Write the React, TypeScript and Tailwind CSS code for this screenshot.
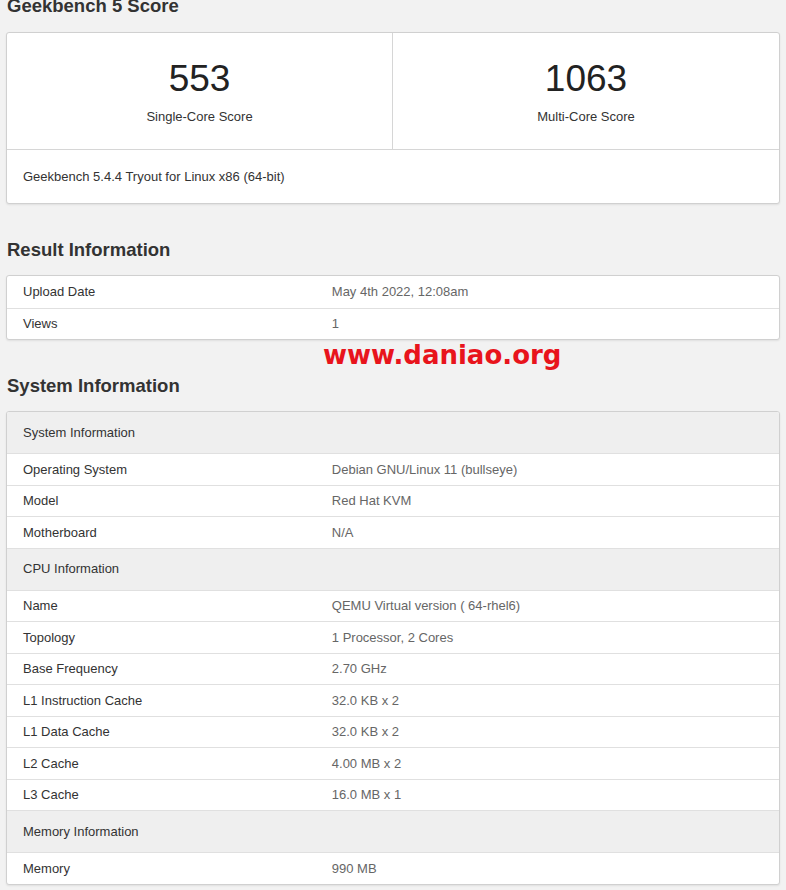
const FONT = "font-['Liberation_Sans',Arial,sans-serif]";

type Row = { label: string; value?: string; header?: boolean };

const RESULT_ROWS: Row[] = [
  { label: "Upload Date", value: "May 4th 2022, 12:08am" },
  { label: "Views", value: "1" },
];

const SYSTEM_ROWS: Row[] = [
  { label: "System Information", header: true },
  { label: "Operating System", value: "Debian GNU/Linux 11 (bullseye)" },
  { label: "Model", value: "Red Hat KVM" },
  { label: "Motherboard", value: "N/A" },
  { label: "CPU Information", header: true },
  { label: "Name", value: "QEMU Virtual version ( 64-rhel6)" },
  { label: "Topology", value: "1 Processor, 2 Cores" },
  { label: "Base Frequency", value: "2.70 GHz" },
  { label: "L1 Instruction Cache", value: "32.0 KB x 2" },
  { label: "L1 Data Cache", value: "32.0 KB x 2" },
  { label: "L2 Cache", value: "4.00 MB x 2" },
  { label: "L3 Cache", value: "16.0 MB x 1" },
  { label: "Memory Information", header: true },
  { label: "Memory", value: "990 MB" },
];

function Heading({ children, first }: { children: string; first?: boolean }) {
  return (
    <h2
      className={`${first ? "-mt-[6px] mb-[14px]" : "mt-[34px] mb-[13px]"} px-[7px] text-[18.5px] font-bold leading-[24px] text-[#333]`}
    >
      {children}
    </h2>
  );
}

function InfoTable({ rows }: { rows: Row[] }) {
  return (
    <div className="overflow-hidden rounded-[3px] border border-[#d0d0d0] bg-white shadow-[0_1px_2px_rgba(0,0,0,0.08)]">
      {rows.map((r, i) =>
        r.header ? (
          <div
            key={r.label}
            className={`flex h-[41px] items-center bg-[#efefef] px-[16px] text-[13px] text-[#333] ${
              i > 0 ? "box-content border-t border-[#e0e0e0]" : ""
            }`}
          >
            {r.label}
          </div>
        ) : (
          <div
            key={r.label}
            className={`grid h-[31.5px] grid-cols-[40%_60%] items-center text-[13px] ${
              i > 0 ? "border-t border-[#e0e0e0]" : ""
            }`}
          >
            <span className="px-[16px] text-[#333]">{r.label}</span>
            <span className="px-[16px] text-[#666]">{r.value}</span>
          </div>
        )
      )}
    </div>
  );
}

export default function App() {
  return (
    <div className={`min-h-[890px] overflow-hidden bg-[#f2f2f2] ${FONT}`}>
      <Heading first>Geekbench 5 Score</Heading>

      <div className="mx-[6px] rounded-[3px] border border-[#d0d0d0] bg-white shadow-[0_1px_2px_rgba(0,0,0,0.08)]">
        <div className="grid grid-cols-2">
          <div className="flex h-[116px] flex-col items-center border-r border-[#d6d6d6] pt-[24px]">
            <span className="text-[37px] leading-[44px] text-[#222]">553</span>
            <span className="mt-[7px] text-[13px] leading-[18px] text-[#333]">Single-Core Score</span>
          </div>
          <div className="flex h-[116px] flex-col items-center pt-[24px]">
            <span className="text-[37px] leading-[44px] text-[#222]">1063</span>
            <span className="mt-[7px] text-[13px] leading-[18px] text-[#333]">Multi-Core Score</span>
          </div>
        </div>
        <div className="flex h-[54px] items-center border-t border-[#d6d6d6] px-[16px] text-[13px] text-[#333]">
          Geekbench 5.4.4 Tryout for Linux x86 (64-bit)
        </div>
      </div>

      <Heading>Result Information</Heading>
      <div className="mx-[6px]">
        <InfoTable rows={RESULT_ROWS} />
      </div>

      <div className="-mb-[30px] flex h-[30px] items-center pl-[323px] font-['DejaVu_Sans',Verdana,sans-serif] text-[26px] font-bold leading-[30px] text-[#e8141c]">
        www.daniao.org
      </div>

      <Heading>System Information</Heading>
      <div className="mx-[6px]">
        <InfoTable rows={SYSTEM_ROWS} />
      </div>
    </div>
  );
}
